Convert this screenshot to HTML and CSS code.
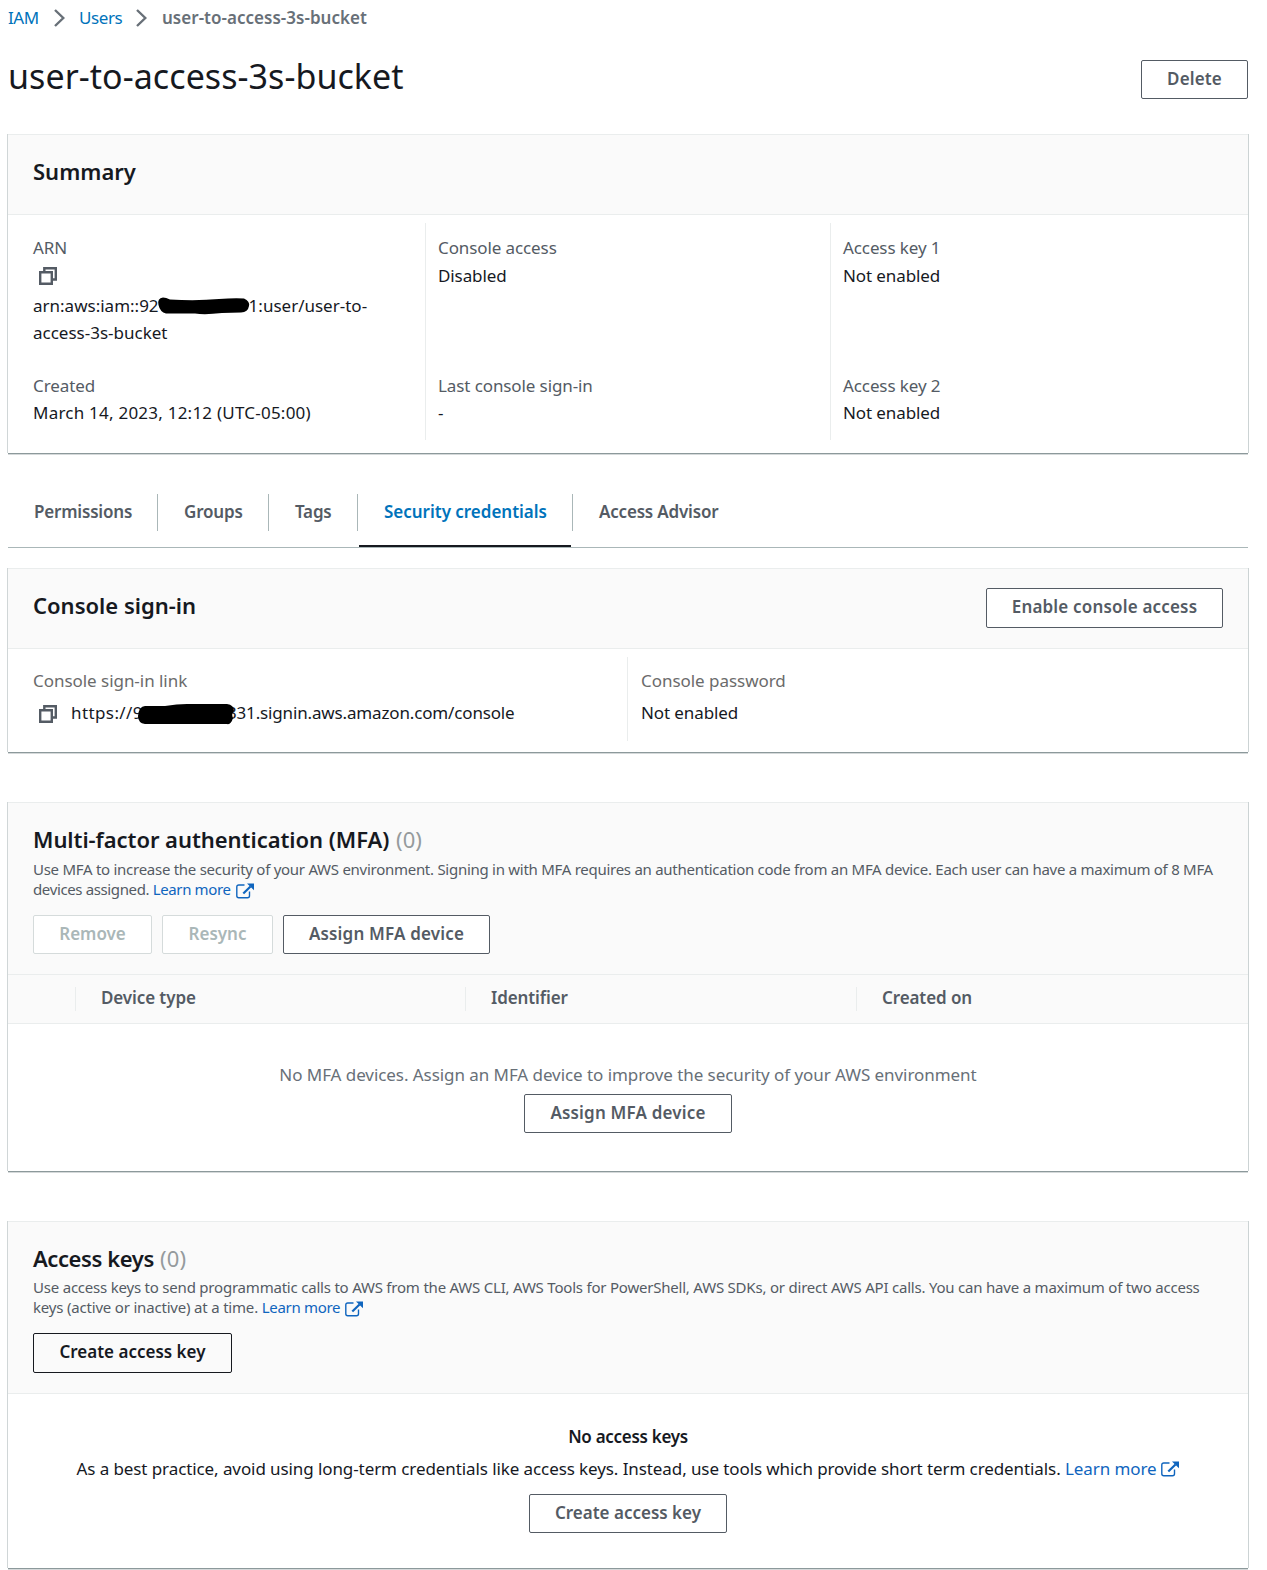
FILE: index.html
```html
<!DOCTYPE html>
<html lang="en">
<head>
<meta charset="utf-8">
<title>user-to-access-3s-bucket | IAM</title>
<link rel="stylesheet" href="styles.css">
</head>
<body>
<svg class="defs" width="0" height="0" aria-hidden="true">
  <symbol id="copy" viewBox="0 0 18 18">
    <path d="M5.300 4.500V1.200H16.800V12.500H13.500M1.200 5.200h11.600V16.800H1.200z" fill="none" stroke="currentColor" stroke-width="2.400"/>
  </symbol>
  <symbol id="external" viewBox="0 0 18 16">
    <path d="M8.500 2H2.800Q.8 2 .8 4v8.700q0 2 2 2h8.700q2 0 2-2V8.500" fill="none" stroke="currentColor" stroke-width="1.400"/>
    <path d="M7.300 10.500L14.500 3.500" fill="none" stroke="currentColor" stroke-width="2.200"/>
    <path d="M11 .6h7v6.600z" fill="currentColor"/>
  </symbol>
  <symbol id="chevron" viewBox="0 0 11 18">
    <path d="M1 1l8.300 8L1 17" fill="none" stroke="currentColor" stroke-width="2.400"/>
  </symbol>
</svg>

<nav class="breadcrumb">
  <a class="crumb-iam">IAM</a>
  <svg class="chevron"><use href="#chevron"/></svg>
  <a class="crumb-users">Users</a>
  <svg class="chevron"><use href="#chevron"/></svg>
  <span class="crumb-current">user-to-access-3s-bucket</span>
</nav>

<header class="page-header">
  <h1>user-to-access-3s-bucket</h1>
  <button class="btn btn-delete">Delete</button>
</header>

<section class="card summary">
  <div class="card-header"><h2 class="h-summary">Summary</h2></div>
  <div class="columns three">
    <div class="col">
      <div class="field tall">
        <div class="label">ARN</div>
        <div class="value icon-line"><svg class="copy"><use href="#copy"/></svg></div>
        <div class="value arn">arn:aws:iam::92<svg class="redact" width="93" height="18" viewBox="0 0 93 18"><path d="M1.500 8Q0 1 6 .5Q9 .5 13 2.500Q40 4 62 2Q76 1 87 1.500Q93 4 92 9Q91 15 84 15.500L65 16Q48 18 38 16.500L9 16.500Q3 15 1.500 8z"/></svg>1:user/user-to-</div>
        <div class="value arn">access-3s-bucket</div>
      </div>
      <div class="field">
        <div class="label">Created</div>
        <div class="value date">March 14, 2023, 12:12 (UTC-05:00)</div>
      </div>
    </div>
    <div class="col">
      <div class="field tall">
        <div class="label">Console access</div>
        <div class="value first">Disabled</div>
      </div>
      <div class="field">
        <div class="label">Last console sign-in</div>
        <div class="value">-</div>
      </div>
    </div>
    <div class="col">
      <div class="field tall">
        <div class="label">Access key 1</div>
        <div class="value first">Not enabled</div>
      </div>
      <div class="field">
        <div class="label">Access key 2</div>
        <div class="value">Not enabled</div>
      </div>
    </div>
  </div>
</section>

<nav class="tabs">
  <a class="tab t1"><span>Permissions</span></a>
  <a class="tab t2"><span>Groups</span></a>
  <a class="tab t3"><span>Tags</span></a>
  <a class="tab t4 active"><span>Security credentials</span></a>
  <a class="tab t5"><span>Access Advisor</span></a>
</nav>

<section class="card signin">
  <div class="card-header">
    <h2 class="h-signin">Console sign-in</h2>
    <button class="btn btn-enable">Enable console access</button>
  </div>
  <div class="columns two">
    <div class="col">
      <div class="label gray">Console sign-in link</div>
      <div class="value link-line"><svg class="copy"><use href="#copy"/></svg><span class="url"><span class="scheme">https://9</span><svg class="redact url-redact" width="98" height="22" viewBox="0 0 98 22"><path d="M1 13Q2 3 8 3L28 3Q40 1 50 1L90 1Q97 2 97 8Q94 11 96 15Q94 22 90 21L8 21Q1 20 1 13z"/></svg>331.signin.aws.amazon.com/console</span></div>
    </div>
    <div class="col">
      <div class="label gray">Console password</div>
      <div class="value">Not enabled</div>
    </div>
  </div>
</section>

<section class="card mfa">
  <div class="card-header stacked">
    <h2 class="h-mfa">Multi-factor authentication (MFA) <span class="count">(0)</span></h2>
    <p class="desc"><span class="mfa-1">Use MFA to increase the security of your AWS environment. Signing in with MFA requires an authentication code from an MFA device. Each user can have a maximum of 8 MFA</span><br><span class="mfa-2">devices assigned. <a>Learn more</a></span><svg class="external"><use href="#external"/></svg></p>
    <div class="actions">
      <button class="btn btn-remove" disabled>Remove</button>
      <button class="btn btn-resync" disabled>Resync</button>
      <button class="btn btn-assign">Assign MFA device</button>
    </div>
  </div>
  <div class="table-head">
    <div class="th"></div>
    <div class="th">Device type</div>
    <div class="th">Identifier</div>
    <div class="th">Created on</div>
  </div>
  <div class="empty">
    <p class="empty-mfa">No MFA devices. Assign an MFA device to improve the security of your AWS environment</p>
    <button class="btn btn-assign">Assign MFA device</button>
  </div>
</section>

<section class="card keys">
  <div class="card-header stacked">
    <h2 class="h-keys">Access keys <span class="count">(0)</span></h2>
    <p class="desc"><span class="keys-1">Use access keys to send programmatic calls to AWS from the AWS CLI, AWS Tools for PowerShell, AWS SDKs, or direct AWS API calls. You can have a maximum of two access</span><br><span class="keys-2">keys (active or inactive) at a time. <a>Learn more</a></span><svg class="external"><use href="#external"/></svg></p>
    <div class="actions">
      <button class="btn btn-create hover">Create access key</button>
    </div>
  </div>
  <div class="empty">
    <strong class="empty-title">No access keys</strong>
    <p class="empty-keys">As a best practice, avoid using long-term credentials like access keys. Instead, use tools which provide short term credentials. <a>Learn more</a><svg class="external"><use href="#external"/></svg></p>
    <button class="btn btn-create">Create access key</button>
  </div>
</section>
</body>
</html>
```
FILE: styles.css
```css
* { box-sizing: border-box; }
body {
  margin: 0;
  width: 1267px;
  height: 1570px;
  overflow: hidden;
  padding: 0 19px 0 8px;
  background: #fff;
  color: #16191f;
  font: 17px/27px "Noto Sans", "Open Sans", sans-serif;
  letter-spacing: -0.1px;
  white-space: nowrap;
}
h1, h2, p { margin: 0; font-weight: 400; }
a { color: #0f65be; }
.defs { position: absolute; }

.breadcrumb { display: flex; align-items: center; height: 36px; color: #687078; }
.breadcrumb a, .crumb-current { padding-bottom: 2px; }
.breadcrumb a { color: #0073bb; letter-spacing: -0.4px; }
.chevron { width: 11px; height: 18px; }
.crumb-iam { width: 46px; }
.crumb-users { width: 57px; margin-left: 14px; }
.crumb-current { margin-left: 15px; font-weight: 600; letter-spacing: 0.02px; }

.page-header { display: flex; justify-content: space-between; height: 98px; padding-top: 24px; }
h1 { margin-top: -1px; font-size: 34px; line-height: 34px; letter-spacing: 0.06px; }

.btn {
  flex: none;
  height: 39px;
  padding: 0 0 1px;
  border: 1px solid #545b64;
  border-radius: 2px;
  background: #fff;
  color: #545b64;
  font: 600 17px/36px "Noto Sans", "Open Sans", sans-serif;
  letter-spacing: 0;
  text-align: center;
}
.btn:disabled { border-color: #d5dbdb; color: #aab7b8; }
.btn.hover { height: 40px; padding-bottom: 2px; border-color: #16191f; background: #fafafa; color: #16191f; }
.btn-delete { width: 107px; letter-spacing: 0.15px; }
.btn-enable { width: 237px; height: 40px; padding-bottom: 3px; letter-spacing: 0.18px; }
.btn-remove { width: 119px; }
.btn-resync { width: 111px; }
.btn-assign { width: 207px; letter-spacing: 0.18px; }
.empty .btn-assign { width: 208px; }
.btn-create { width: 199px; }
.empty .btn-create { width: 198px; }

.card {
  border-top: 1px solid #eaeded;
  background: #fff;
  box-shadow: 0 1px #8c999b, -1px 0 #d0d6d7, 1px 0 #ccd3d4, 0 2px #d5d9da;
}
.summary { height: 319px; }
.signin { height: 184px; margin-top: 20px; }
.mfa { height: 369px; margin-top: 50px; }
.keys { height: 347px; margin-top: 50px; }
.card-header {
  display: flex;
  justify-content: space-between;
  align-items: flex-start;
  height: 80px;
  padding: 19px 25px 0;
  border-bottom: 1px solid #eaeded;
  background: #fafafa;
}
h2 { margin-top: -1px; font-size: 22px; line-height: 37px; font-weight: 600; letter-spacing: 0; }
.h-mfa { letter-spacing: -0.05px; }
.h-keys { letter-spacing: -0.42px; }
.count { margin-left: 1px; font-weight: 400; color: #959b9d; letter-spacing: 0.1px; }
.card-header.stacked { flex-direction: column; justify-content: flex-start; height: 172px; }
.desc { margin-top: 1px; color: #545b64; font-size: 15px; line-height: 20px; letter-spacing: 0; }
.mfa-1 { letter-spacing: -0.272px; }
.mfa-2 { letter-spacing: -0.37px; }
.keys-1 { letter-spacing: -0.21px; }
.keys-2 { letter-spacing: -0.19px; }
.keys-2 a { letter-spacing: -0.3px; }
.actions { display: flex; gap: 10px; margin-top: 16px; }
.keys .desc { margin-top: 0; }

.columns { display: grid; padding: 8px 12px 0; }
.three { grid-template-columns: repeat(3, 405px); }
.two { grid-template-columns: repeat(2, 607px); }
.col { padding: 11px 0 0 12px; height: 217px; border-left: 1px solid #eaeded; }
.two .col { height: 84px; padding-top: 10px; }
.two .col:last-child { padding-left: 13px; }
.col:first-child { border-left-color: transparent; }
.label { color: #545b64; letter-spacing: -0.1px; }
.label.gray { color: #6b6b6b; letter-spacing: -0.04px; }
.two .label { margin-bottom: 5px; }
.tall { height: 138px; }
.first { padding-top: 1px; }
.icon-line { height: 31px; padding-top: 6px; }
.copy { width: 18px; height: 18px; margin-left: 6px; color: #545b64; }
.icon-line .copy { display: block; }
.arn { letter-spacing: 0; }
.date { letter-spacing: 0.23px; }
.redact { position: relative; margin: 0 -1px 0 -2px; vertical-align: -3px; fill: #000; }
.link-line { display: flex; align-items: center; height: 27px; }
.link-line .copy { margin-top: 2px; }
.url { margin-left: 14px; letter-spacing: -0.15px; }
.scheme { letter-spacing: 0.4px; }
.url-redact { margin: -4px -8px -4px -6px; vertical-align: -2px; }

.tabs { display: flex; height: 54px; margin-top: 41px; border-bottom: 1px solid #aab7b8; }
.tab { height: 53px; color: #545b64; font-weight: 600; letter-spacing: -0.19px; }
.tab span {
  display: block;
  height: 37px;
  padding-left: 26px;
  border-right: 1px solid #aab7b8;
  line-height: 35px;
}
.tab:last-child span { border-right: 0; }
.t1 { width: 150px; }
.t2 { width: 111px; }
.t3 { width: 89px; }
.t4 { width: 215px; }
.active { color: #0073bb; letter-spacing: -0.02px; }
.active::after { content: ""; display: block; width: 212px; height: 2px; margin: 14px 0 0 1px; background: #16191f; }

.table-head {
  display: grid;
  grid-template-columns: 68px 390px 391px 391px;
  height: 49px;
  padding-top: 12px;
  border-bottom: 1px solid #eaeded;
  background: #fafafa;
  color: #545b64;
  font-weight: 600;
}
.th { height: 24px; padding-left: 25px; border-right: 1px solid #eaeded; line-height: 21px; }
.th:last-child { border-right: 0; }

.empty { display: flex; flex-direction: column; align-items: center; padding-top: 37px; }
.keys .empty { padding-top: 29px; }
.empty-mfa { margin-bottom: 6px; color: #687078; letter-spacing: -0.06px; }
.empty-title { font-weight: 600; letter-spacing: -0.3px; }
.empty-keys { margin: 5px 0 12px; letter-spacing: -0.09px; }
.external { width: 18px; height: 16px; margin-left: 5px; vertical-align: -4px; color: #0f65be; }
.desc .external { margin-top: -4px; }
.empty-keys .external { vertical-align: -2px; }
```
